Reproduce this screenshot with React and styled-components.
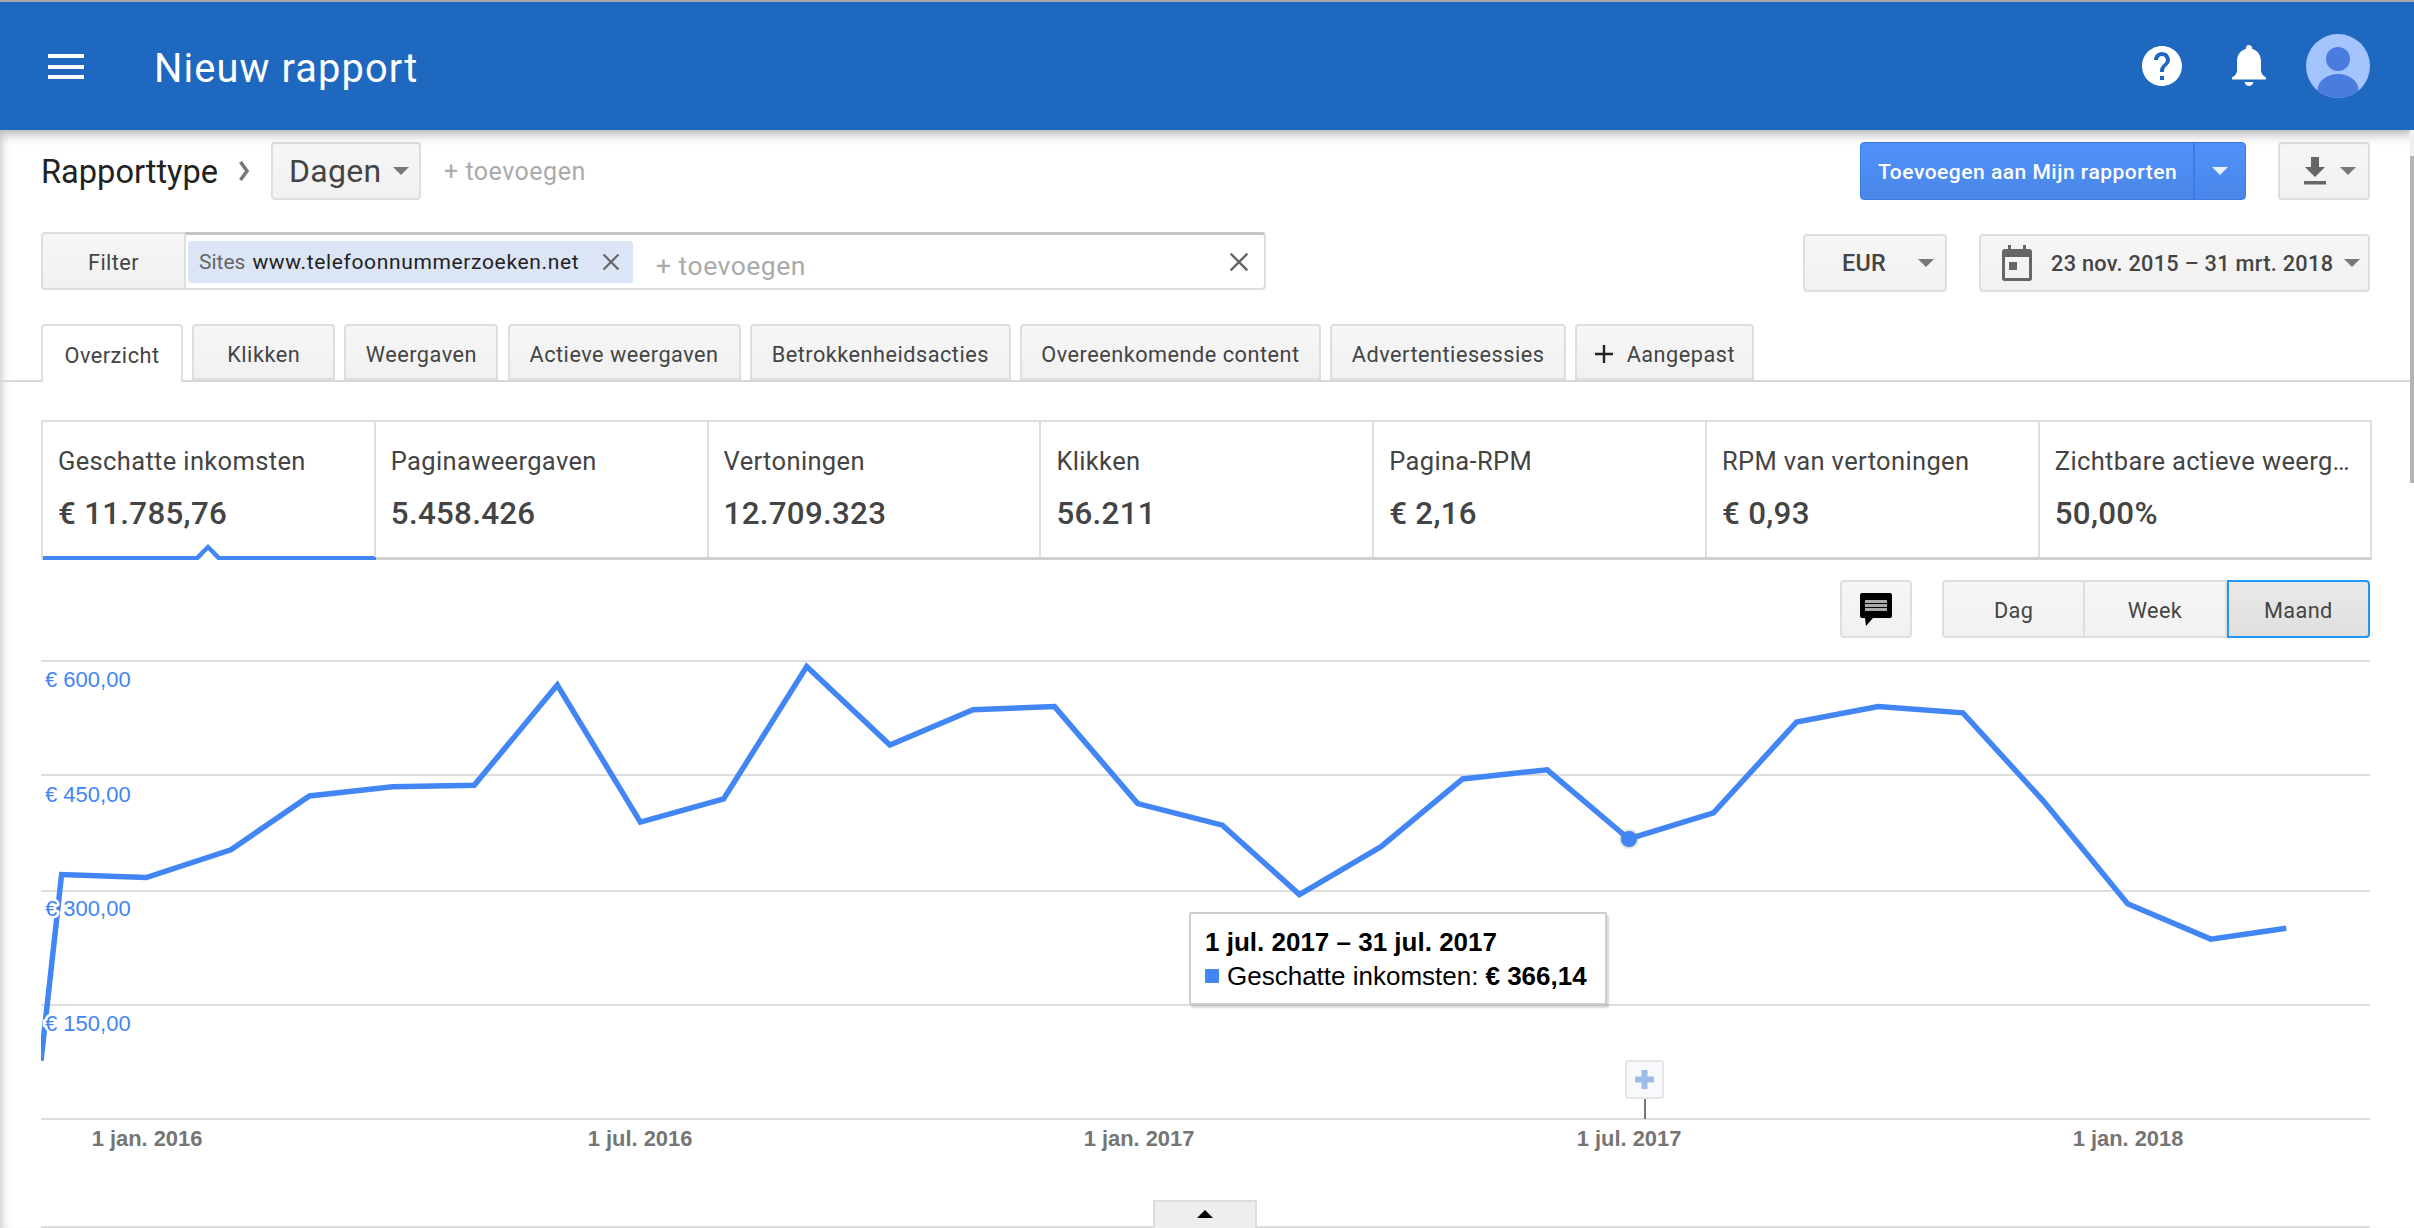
import React from "react";
import styled, { createGlobalStyle } from "styled-components";

const Global = createGlobalStyle`
  html, body { margin: 0; padding: 0; background: #fff; overflow: hidden; }
  * { box-sizing: border-box; }
  body { font-family: Roboto, "Liberation Sans", sans-serif; color: #444; }
`;

const Page = styled.div`
  position: relative;
  width: 2414px;
  height: 1228px;
  overflow: hidden;
  background: #fff;
`;
const Header = styled.header`
  position: relative;
  z-index: 2;
  height: 130px;
  background: #1e69bf;
  border-top: 2px solid #a8a8a8;
  box-shadow: 0 3px 12px rgba(0, 0, 0, 0.35);
  display: flex;
  align-items: center;
  padding: 0 44px 0 48px;
  color: #fff;
`;
const Menu = styled.div`
  width: 36px;
  height: 25px;
  margin-top: 1px;
  display: flex;
  flex-direction: column;
  justify-content: space-between;
  span { display: block; height: 4px; background: #fff; }
`;
const Title = styled.h1`
  margin: 5px 0 0 70px;
  font: 400 39.8px Roboto, sans-serif;
  letter-spacing: 1.1px;
  color: #fff;
`;
const HeaderIcons = styled.div`
  margin-left: auto;
  display: flex;
  align-items: center;
`;
const Main = styled.main`
  height: 1098px;
  padding: 12px 44px 0 41px;
  box-shadow: inset 8px 0 8px -6px rgba(0, 0, 0, 0.22);
`;
const Row = styled.div`
  display: flex;
  align-items: flex-start;
  height: ${p => p.$h || 58}px;
  margin-top: ${p => p.$mt || 0}px;
`;
const Heading = styled.span`
  width: 178px;
  font-size: 32.6px;
  line-height: 60px;
  color: #222;
  white-space: nowrap;
`;
const Chevron = styled.svg`
  flex: none;
  margin: 19px 22px 0 20px;
  width: 10px;
  height: 20px;
`;
const Btn = styled.div`
  flex: none;
  display: flex;
  align-items: center;
  height: ${p => p.$h || 58}px;
  width: ${p => (p.$w ? p.$w + "px" : "auto")};
  margin-top: ${p => p.$mt || 0}px;
  padding: ${p => p.$pt || 0}px ${p => p.$px || 0}px 0;
  background: linear-gradient(#f6f6f6, #f1f1f1);
  border: 2px solid #dedede;
  border-radius: 4px;
  color: #444;
  font-size: ${p => p.$fs || 21.7}px;
  font-weight: ${p => p.$fw || 400};
  letter-spacing: ${p => p.$ls || 0.4}px;
  white-space: nowrap;
  svg { flex: none; }
`;
const Caret = styled.i`
  display: block;
  flex: none;
  width: 0;
  height: 0;
  margin-left: ${p => p.$ml || 0}px;
  border-left: ${p => p.$s || 8}px solid transparent;
  border-right: ${p => p.$s || 8}px solid transparent;
  border-top: ${p => p.$s || 8}px solid ${p => p.$c || "#777"};
`;
const Add = styled.span`
  font-size: 25px;
  color: #aaa;
  letter-spacing: 0.5px;
  line-height: 60px;
  margin-left: 23px;
`;
const Right = styled.div`
  margin-left: auto;
  display: flex;
  gap: ${p => p.$gap}px;
`;
const BlueGroup = styled.div`
  display: flex;
  height: 58px;
  width: 386px;
  border: 1px solid #3a7ce6;
  border-radius: 4px;
  background: linear-gradient(#5092fb, #4a86e8);
  color: #fff;
  overflow: hidden;
`;
const BlueMain = styled.div`
  flex: 1;
  display: flex;
  align-items: center;
  padding: 2px 0 0 17px;
  font-size: 21px;
  font-weight: 500;
  letter-spacing: 0.5px;
  white-space: nowrap;
  border-right: 2px solid #3a7ce6;
`;
const BlueCaret = styled.div`
  width: 50px;
  display: flex;
  align-items: center;
  justify-content: center;
`;
const FilterBox = styled.div`
  display: flex;
  width: 1225px;
  height: 58px;
`;
const FilterLabel = styled(Btn)`
  width: 143px;
  justify-content: center;
  border-radius: 4px 0 0 4px;
  border-right: 0;
`;
const FilterInput = styled.div`
  flex: 1;
  display: flex;
  align-items: center;
  padding: 0 15px 0 2px;
  border: 2px solid #dedede;
  border-top: 3px solid #c4c4c4;
  border-radius: 0 4px 4px 0;
`;
const Chip = styled.div`
  display: flex;
  align-items: center;
  width: 445px;
  height: 42px;
  padding: 0 0 0 11px;
  border-radius: 3px;
  background: #dce5f5;
  font-size: 21px;
  color: #666;
  white-space: nowrap;
  b { font-weight: 400; color: #222; margin-left: 7px; letter-spacing: 0.65px; }
  svg { flex: none; margin-left: 23px; }
`;
const FilterAdd = styled.span`
  margin-left: 23px;
  margin-top: 8px;
  font-size: 26.5px;
  letter-spacing: 0.5px;
  color: #aaa;
`;
const Clear = styled.span`
  margin-left: auto;
  display: flex;
`;
const DateText = styled.span`
  margin: 0 0 0 19px;
`;
const TabBar = styled.nav`
  display: flex;
  gap: 9.2px;
  height: 58px;
  margin: 34px -40px 0 -41px;
  padding-left: 41px;
  border-bottom: 2px solid #d8d8d8;
`;
const Tab = styled.div`
  display: flex;
  align-items: center;
  justify-content: center;
  width: ${p => p.$w}px;
  height: ${p => (p.$active ? 58 : 56)}px;
  padding-top: ${p => (p.$active ? 2 : 4)}px;
  background: ${p => (p.$active ? "#fff" : "linear-gradient(#f6f6f6, #f1f1f1)")};
  border: 2px solid #dedede;
  border-bottom: ${p => (p.$active ? "0" : "2px solid #dedede")};
  border-radius: 4px 4px 0 0;
  font-size: 21.7px;
  letter-spacing: 0.5px;
  color: #444;
  white-space: nowrap;
  svg { flex: none; margin-right: 14px; }
`;
const Metrics = styled.section`
  display: grid;
  grid-template-columns: repeat(6, 332.8px) 1fr;
  width: 2331px;
  height: 140px;
  margin-top: 38px;
  border-top: 2px solid #dedede;
  border-left: 2px solid #dedede;
  border-right: 2px solid #dedede;
  border-bottom: 3px solid #cfcfcf;
`;
const Metric = styled.div`
  position: relative;
  padding: 24px 14px 0 15px;
  min-width: 0;
  border-right: ${p => (p.$last ? "0" : "2px solid #dedede")};
  ${p => p.$active && "box-shadow: inset 0 -1px 0 #4285f4, 0 3px 0 #4285f4;"}
`;
const MetricLabel = styled.div`
  font-size: 25.5px;
  line-height: 30px;
  letter-spacing: 0.35px;
  color: #444;
  white-space: nowrap;
  overflow: hidden;
  text-overflow: ellipsis;
`;
const MetricValue = styled.div`
  margin-top: 19px;
  font-size: 31.3px;
  line-height: 38px;
  font-weight: 500;
  letter-spacing: 0.3px;
  color: #444;
`;
const Notch = styled.svg`
  position: absolute;
  left: 50%;
  bottom: -3px;
  width: 32px;
  height: 16px;
  margin-left: -16px;
`;
const Tools = styled.div`
  display: flex;
  justify-content: flex-end;
  gap: 30px;
  height: 58px;
  margin-top: 20px;
`;
const IconBtn = styled(Btn)`
  width: 72px;
  justify-content: center;
`;
const Segments = styled.div`
  display: flex;
  width: 428px;
`;
const Segment = styled.div`
  flex: 1;
  display: flex;
  align-items: center;
  justify-content: center;
  padding-top: 2px;
  font-size: 21.7px;
  letter-spacing: 0.4px;
  color: #444;
  background: ${p => (p.$on ? "linear-gradient(#e9e9e9, #dfdfdf)" : "linear-gradient(#f6f6f6, #f1f1f1)")};
  border: 2px solid ${p => (p.$on ? "#2196f3" : "#dedede")};
  border-left-width: ${p => (p.$first || p.$on ? 2 : 0)}px;
  border-radius: ${p => (p.$first ? "4px 0 0 4px" : p.$on ? "0 4px 4px 0" : "0")};
`;
const Chart = styled.div`
  position: relative;
  width: 2373px;
  height: 568px;
  margin-top: 22px;
  svg { display: block; }
`;
const AxisLabel = styled.text`
  font: 400 22px "Liberation Sans", Arial, sans-serif;
  fill: #4285f4;
  stroke: #fff;
  stroke-width: 5px;
  paint-order: stroke;
  stroke-linejoin: round;
`;
const DateLabel = styled.text`
  font: 700 21.9px "Liberation Sans", Arial, sans-serif;
  fill: #757575;
`;
const Tooltip = styled.div`
  position: absolute;
  left: 1148px;
  top: 252px;
  width: 418px;
  height: 93px;
  padding: 12px 14px;
  background: #fff;
  border: 2px solid #ccc;
  border-radius: 2px;
  box-shadow: 2px 3px 2px rgba(0, 0, 0, 0.15);
  font: 400 26px/33.5px "Liberation Sans", Arial, sans-serif;
  color: #000;
  white-space: nowrap;
  b { font-weight: 700; }
`;
const TipRow = styled.div`
  display: flex;
  align-items: center;
  b { margin-left: 7px; }
`;
const Swatch = styled.i`
  display: block;
  width: 14px;
  height: 14px;
  margin-right: 8px;
  background: #4285f4;
`;
const Marker = styled.div`
  position: absolute;
  left: 1584px;
  top: 400px;
  width: 39px;
  height: 39px;
  display: flex;
  align-items: center;
  justify-content: center;
  background: #f7f9fc;
  border: 2px solid #e6e6e6;
  border-radius: 3px;
`;
const MarkerStem = styled.i`
  position: absolute;
  left: 1603px;
  top: 439px;
  width: 2px;
  height: 20px;
  background: #777;
`;
const Handle = styled.div`
  position: absolute;
  left: 1112px;
  bottom: 0;
  width: 104px;
  height: 28px;
  display: flex;
  justify-content: center;
  padding-top: 8px;
  background: #eee;
  border: 2px solid #ddd;
  border-bottom: 0;
`;
const Thumb = styled.div`
  position: absolute;
  z-index: 3;
  right: 0;
  top: 130px;
  width: 4px;
  height: 353px;
  background: linear-gradient(#f0f0f0 26px, #b4b4b4 26px);
`;

const S = 2414 / 1568;
const raw = [[26.6,689],[40,568],[95,570],[150,552],[201,517],[255,511],[308,510],[362,445],[416,534],[470,519],[524,433],[578,484],[632,461],[685,459],[739,522],[794,536],[844,581],[897,550],[950,506],[1005,500],[1058,545],[1113,528],[1167,469],[1220,459],[1275,463],[1327,520],[1382,587],[1436,610],[1485,603]];
const points = raw.map(([x, y]) => `${(x * S - 41).toFixed(1)},${(y * S - 660).toFixed(1)}`).join(" ");
const grid = [1, 115, 231, 345, 459];
const yLabels = [["€ 600,00", 26.5], ["€ 450,00", 141.5], ["€ 300,00", 255.5], ["€ 150,00", 370.5]];
const xLabels = [["1 jan. 2016", 106], ["1 jul. 2016", 599], ["1 jan. 2017", 1098], ["1 jul. 2017", 1588], ["1 jan. 2018", 2087]];
const tabs = [["Overzicht", 142], ["Klikken", 143], ["Weergaven", 154], ["Actieve weergaven", 233], ["Betrokkenheidsacties", 261], ["Overeenkomende content", 301], ["Advertentiesessies", 236]];
const metrics = [["Geschatte inkomsten", "€ 11.785,76"], ["Paginaweergaven", "5.458.426"], ["Vertoningen", "12.709.323"], ["Klikken", "56.211"], ["Pagina-RPM", "€ 2,16"], ["RPM van vertoningen", "€ 0,93"], ["Zichtbare actieve weergaven", "50,00%"]];

const XIcon = ({ size = 18, c = "#666" }) => (
  <svg width={size} height={size} viewBox="0 0 18 18" fill="none" stroke={c} strokeWidth="2.2">
    <path d="M1.5 1.5 16.5 16.5M16.5 1.5 1.5 16.5" />
  </svg>
);

export default function App() {
  return (
    <Page>
      <Global />
      <Header>
        <Menu><span /><span /><span /></Menu>
        <Title>Nieuw rapport</Title>
        <HeaderIcons>
          <svg width="48" height="48" viewBox="0 0 24 24" fill="#fff">
            <path d="M12 2C6.48 2 2 6.48 2 12s4.48 10 10 10 10-4.48 10-10S17.52 2 12 2zm1 17h-2v-2h2v2zm2.07-7.75l-.9.92C13.45 12.9 13 13.5 13 15h-2v-.5c0-1.1.45-2.1 1.17-2.83l1.24-1.26c.37-.36.59-.86.59-1.41 0-1.1-.9-2-2-2s-2 .9-2 2H8c0-2.21 1.79-4 4-4s4 1.79 4 4c0 .88-.36 1.68-.93 2.25z" />
          </svg>
          <svg width="36" height="42" viewBox="0 0 36 42" fill="#fff" style={{ marginLeft: 45 }}>
            <path d="M18 0c1.9 0 3.2 1.4 3.2 3.2v.9C27 5.600 30 10.500 30 16.500V26c0 2.500 2.500 5 5 6.500V34.500H1V32.500C3.500 31 6 28.500 6 26V16.500C6 10.500 9 5.600 14.800 4.100v-.9C14.800 1.400 16.100 0 18 0z" />
            <path d="M13.500 37h9c-.6 2.600-2.400 4-4.500 4s-3.900-1.400-4.500-4z" />
          </svg>
          <svg width="64" height="64" viewBox="0 0 64 64" style={{ marginLeft: 39 }}>
            <defs><clipPath id="av"><circle cx="32" cy="32" r="32" /></clipPath></defs>
            <circle cx="32" cy="32" r="32" fill="#a3c4fc" />
            <g clipPath="url(#av)" fill="#4a7bdf">
              <circle cx="32" cy="25" r="12" />
              <ellipse cx="32" cy="56" rx="20.500" ry="16" />
            </g>
          </svg>
        </HeaderIcons>
      </Header>
      <Main>
        <Row>
          <Heading>Rapporttype</Heading>
          <Chevron viewBox="0 0 10 20" fill="none" stroke="#777" strokeWidth="3.5">
            <path d="M1.500 1 8 10 1.500 19" />
          </Chevron>
          <Btn $w={150} $px={16} $fs={32} $ls={0.3}>Dagen<Caret $ml={11} $s={8} /></Btn>
          <Add>+ toevoegen</Add>
          <Right $gap={32}>
            <BlueGroup>
              <BlueMain>Toevoegen aan Mijn rapporten</BlueMain>
              <BlueCaret><Caret $s={8} $c="#e8f0fe" /></BlueCaret>
            </BlueGroup>
            <Btn $w={92} $px={22}>
              <svg width="26" height="28" viewBox="0 0 26 28" fill="#666">
                <path d="M9 0h8v10h6L13 20 3 10h6zM2 24h22v3.500H2z" />
              </svg>
              <Caret $ml={12} $s={8} />
            </Btn>
          </Right>
        </Row>
        <Row $mt={32}>
          <FilterBox>
            <FilterLabel $pt={2}>Filter</FilterLabel>
            <FilterInput>
              <Chip>Sites<b>www.telefoonnummerzoeken.net</b><XIcon /></Chip>
              <FilterAdd>+ toevoegen</FilterAdd>
              <Clear><XIcon size={20} /></Clear>
            </FilterInput>
          </FilterBox>
          <Right $gap={32}>
            <Btn $mt={2} $w={144} $px={37} $fw={500} $fs={23.4} $ls={0.2}>EUR<Caret $ml={32} $s={8} /></Btn>
            <Btn $mt={2} $w={391} $px={21} $fw={500} $fs={21.7} $ls={0.3}>
              <svg width="30" height="36" viewBox="0 0 30 36" fill="#666">
                <path d="M6 0h3v4h12V0h3v4h3.500C29 4 30 5 30 6.500v27c0 1.500-1 2.500-2.500 2.500h-25C1 36 0 35 0 33.500v-27C0 5 1 4 2.500 4H6zM3 12v21h24V12z" />
                <path d="M7 17h8v8H7z" />
              </svg>
              <DateText>23 nov. 2015 – 31 mrt. 2018</DateText>
              <Caret $ml={11} $s={8} />
            </Btn>
          </Right>
        </Row>
        <TabBar>
          {tabs.map(([t, w], i) => <Tab key={t} $w={w} $active={i === 0}>{t}</Tab>)}
          <Tab $w={179}>
            <svg width="18" height="18" viewBox="0 0 18 18" stroke="#222" strokeWidth="2.400"><path d="M9 0v18M0 9h18" /></svg>
            Aangepast
          </Tab>
        </TabBar>
        <Metrics>
          {metrics.map(([l, v], i) => (
            <Metric key={l} $active={i === 0} $last={i === 6}>
              <MetricLabel>{l}</MetricLabel>
              <MetricValue>{v}</MetricValue>
              {i === 0 && (
                <Notch viewBox="0 0 32 16">
                  <path d="M0 16h32L16 0z" fill="#4285f4" />
                  <path d="M6.500 16h19L16 6z" fill="#fff" />
                </Notch>
              )}
            </Metric>
          ))}
        </Metrics>
        <Tools>
          <IconBtn>
            <svg width="32" height="33" viewBox="0 0 32 33">
              <path d="M2 0h28a2 2 0 0 1 2 2v21a2 2 0 0 1-2 2H13l-7 8-1-8H2a2 2 0 0 1-2-2V2a2 2 0 0 1 2-2z" fill="#000" />
              <path d="M5 7h22v3H5zM5 11h22v3H5zM5 15h22v3H5z" fill="#aaa" />
            </svg>
          </IconBtn>
          <Segments>
            <Segment $first>Dag</Segment>
            <Segment>Week</Segment>
            <Segment $on>Maand</Segment>
          </Segments>
        </Tools>
        <Chart>
          <svg width="2329" height="568" viewBox="0 0 2329 568">
            <defs>
              <radialGradient id="halo"><stop offset="60%" stopColor="#888" /><stop offset="100%" stopColor="#888" stopOpacity="0" /></radialGradient>
            </defs>
            {grid.map(y => <line key={y} x1="0" x2="2329" y1={y} y2={y} stroke="#dedede" strokeWidth="2" />)}
            <line x1="0" x2="2329" y1="567" y2="567" stroke="#dedede" strokeWidth="2" />
            <polyline points={points} fill="none" stroke="#4285f4" strokeWidth="5.5" strokeLinejoin="miter" />
            <circle cx="1588" cy="179" r="11" fill="url(#halo)" opacity="0.5" />
            <circle cx="1588" cy="179" r="8" fill="#4285f4" />
            {yLabels.map(([t, y]) => <AxisLabel key={t} x="4" y={y}>{t}</AxisLabel>)}
            {xLabels.map(([t, x]) => <DateLabel key={t} x={x} y="486" textAnchor="middle">{t}</DateLabel>)}
          </svg>
          <Tooltip>
            <b>1 jul. 2017 – 31 jul. 2017</b>
            <TipRow><Swatch />Geschatte inkomsten:<b>€ 366,14</b></TipRow>
          </Tooltip>
          <Marker>
            <svg width="19" height="19" viewBox="0 0 19 19"><path d="M6.500 0h6v6.500H19v6h-6.500V19h-6v-6.500H0v-6h6.500z" fill="#9dbde6" /></svg>
          </Marker>
          <MarkerStem />
          <Handle>
            <svg width="16" height="8" viewBox="0 0 16 8"><path d="M8 0l8 8H0z" fill="#000" /></svg>
          </Handle>
        </Chart>
      </Main>
      <Thumb />
    </Page>
  );
}
